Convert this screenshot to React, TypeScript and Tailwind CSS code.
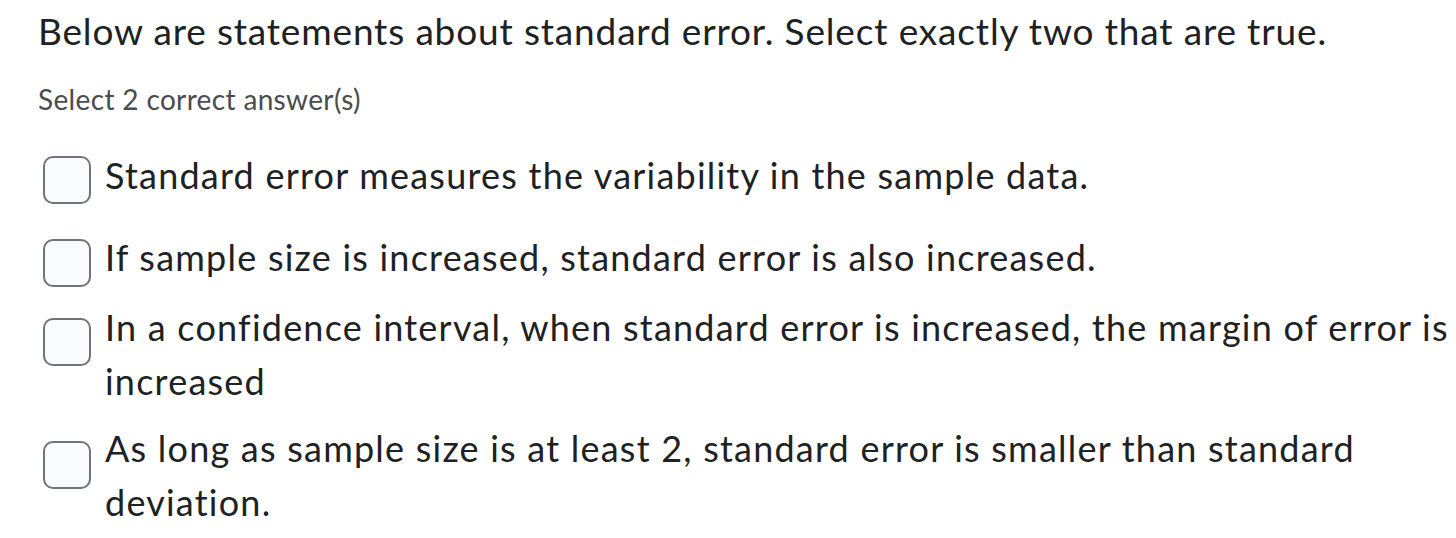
import React, { useState } from 'react';

type Option = { id: number; text: string; rowClass: string; boxClass: string };

const options: Option[] = [
  { id: 1, text: 'Standard error measures the variability in the sample data.', rowClass: 'mt-[32px]', boxClass: 'mt-[8px]' },
  { id: 2, text: 'If sample size is increased, standard error is also increased.', rowClass: 'mt-[26px]', boxClass: 'mt-[9px]' },
  { id: 3, text: 'In a confidence interval, when standard error is increased, the margin of error is increased', rowClass: 'mt-[13px]', boxClass: 'mt-[18px]' },
  { id: 4, text: 'As long as sample size is at least 2, standard error is smaller than standard deviation.', rowClass: 'mt-[13px]', boxClass: 'mt-[20px]' },
];

export default function App() {
  const [checked, setChecked] = useState<number[]>([]);

  const toggle = (id: number) =>
    setChecked(prev => (prev.includes(id) ? prev.filter(i => i !== id) : [...prev, id]));

  return (
    <div className="w-[1456px] h-[538px] overflow-hidden bg-white pl-[38px] pt-[9px] font-['Lato','Liberation_Sans',sans-serif]">
      <h1 className="text-[37px] leading-[44px] tracking-[0.84px] text-[#202122]">
        Below are statements about standard error. Select exactly two that are true.
      </h1>
      <p className="mt-[29px] text-[28px] leading-[34px] tracking-[0.35px] text-[#494c4e]">Select 2 correct answer(s)</p>

      <div className="flex flex-col">
        {options.map(opt => (
          <label key={opt.id} className={`flex items-start gap-[14px] cursor-pointer ${opt.rowClass}`}>
            <span
              onClick={() => toggle(opt.id)}
              className={`shrink-0 ml-[5px] w-[48px] h-[48px] rounded-[10px] border-2 border-[#6e7477] bg-[#f9fbff] ${opt.boxClass}`}
            >
              {checked.includes(opt.id) && (
                <svg viewBox="0 0 24 24" className="w-full h-full text-[#202122]" fill="none" stroke="currentColor" strokeWidth={2.5}>
                  <path d="M6 12l4 4 8-8" />
                </svg>
              )}
            </span>
            <span className="text-[36px] leading-[54px] tracking-[1.22px] text-[#202122]">{opt.text}</span>
          </label>
        ))}
      </div>
    </div>
  );
}
